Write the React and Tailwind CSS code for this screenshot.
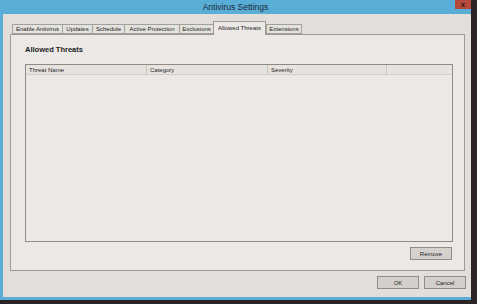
import React from 'react';

const tabs = [
  { label: 'Enable Antivirus', w: 'w-[50px]' },
  { label: 'Updates', w: 'w-[30px]' },
  { label: 'Schedule', w: 'w-[32px]' },
  { label: 'Active Protection', w: 'w-[55px]' },
  { label: 'Exclusions', w: 'w-[34px]' },
  { label: 'Allowed Threats', w: 'w-[53px]', active: true },
  { label: 'Extensions', w: 'w-[36px]' },
];

const columns = [
  { label: 'Threat Name', w: 'w-[121px]' },
  { label: 'Category', w: 'w-[121px]' },
  { label: 'Severity', w: 'w-[119px]' },
];

const App = () => {
  return (
    <div className="w-[477px] h-[304px] bg-[#2a2524] flex font-['Liberation_Sans',Arial,sans-serif] text-[#1d1d1d]">
      <div className="w-[471px] h-[300px] bg-[#5aadd6] flex flex-col pl-[3px] pb-[3px]">
        {/* title bar */}
        <div className="h-[14px] relative flex items-center justify-center">
          <span className="text-[8.5px] leading-none text-[#1a2b36] ml-[-3px]">Antivirus Settings</span>
          <div className="absolute right-0 top-0 w-[16px] h-[9px] bg-[#b4493c] flex items-center justify-center">
            <span className="text-[7px] leading-none font-bold text-[#2a1a18] -mt-[1px]">x</span>
          </div>
        </div>

        {/* body */}
        <div className="flex-1 bg-[#e2dfdb] flex flex-col pl-[7px] pr-[6px]">
          {/* tabs */}
          <div className="flex items-end pt-[7px] pl-[2px] h-[20px] relative z-10">
            {tabs.map((t) =>
              t.active ? (
                <div
                  key={t.label}
                  className={`${t.w} h-[14px] -mb-[1px] bg-[#ebe8e5] border border-b-0 border-[#9d9a96] flex items-start justify-center pt-[3px] text-[6px] leading-none`}
                >
                  {t.label}
                </div>
              ) : (
                <div
                  key={t.label}
                  className={`${t.w} h-[10px] bg-[#e4e2de] border border-[#a3a09c] border-r-0 last:border-r flex items-center justify-center text-[6px] leading-none`}
                >
                  {t.label}
                </div>
              )
            )}
          </div>

          {/* panel */}
          <div className="h-[237px] bg-[#ebe8e5] border border-[#9d9a96] flex flex-col pl-[14px] pr-[11px]">
            <div className="pt-[11px] h-[29px] text-[7.5px] font-bold leading-none">Allowed Threats</div>
            <div className="h-[178px] border border-[#8d8a87] bg-[#ebe8e5] flex flex-col">
              <div className="h-[10px] flex bg-[#e7e4e0] border-b border-[#d2cfcb]">
                {columns.map((c) => (
                  <div
                    key={c.label}
                    className={`${c.w} border-r border-[#c9c6c2] flex items-center pl-[3px] text-[6px] leading-none`}
                  >
                    {c.label}
                  </div>
                ))}
                <div className="flex-1" />
              </div>
            </div>
            <div className="flex justify-end mt-[5px]">
              <button className="w-[42px] h-[13px] bg-[#d5d2ce] border border-[#8f8c89] text-[6px] leading-none mr-[1px]">
                Remove
              </button>
            </div>
          </div>

          {/* dialog buttons */}
          <div className="flex justify-end gap-[5px] pt-[5px] -mr-[1px]">
            <button className="w-[42px] h-[13px] bg-[#d3d0cc] border border-[#8f8c89] text-[6px] leading-none">OK</button>
            <button className="w-[42px] h-[13px] bg-[#d3d0cc] border border-[#8f8c89] text-[6px] leading-none">Cancel</button>
          </div>
        </div>
      </div>
    </div>
  );
};

export default App;
